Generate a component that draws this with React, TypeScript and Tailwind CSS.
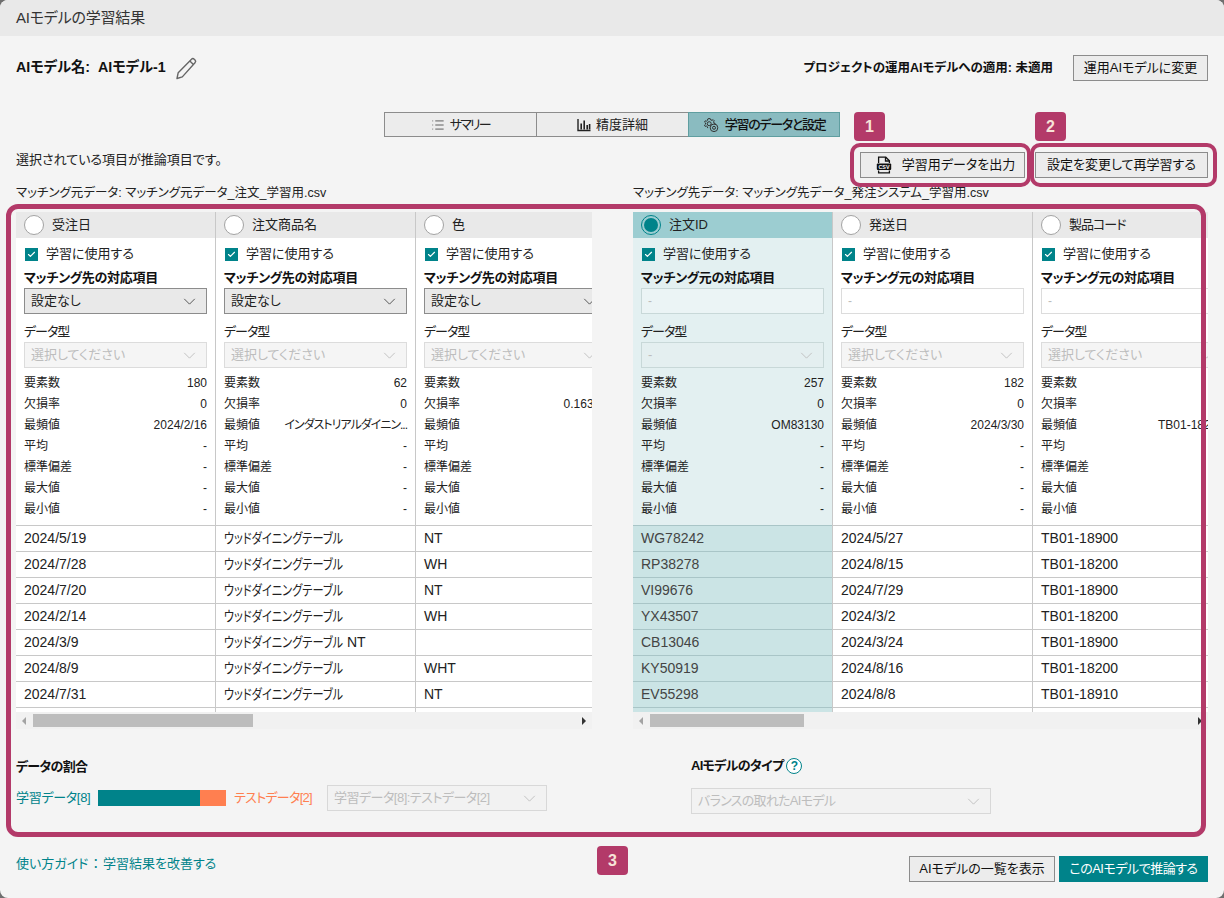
import React from "react";
import { Check, List } from "lucide-react";

type Col = {
  name: string;
  selected?: boolean;
  right?: boolean;
  stats: string[];
  rows: string[];
};

const labels = ["要素数", "欠損率", "最頻値", "平均", "標準偏差", "最大値", "最小値"];
const WOOD = "ウッドダイニングテーブル";

const leftCols: Col[] = [
  { name: "受注日", stats: ["180", "0", "2024/2/16", "-", "-", "-", "-"], rows: ["2024/5/19", "2024/7/28", "2024/7/20", "2024/2/14", "2024/3/9", "2024/8/9", "2024/7/31", ""] },
  {
    name: "注文商品名",
    stats: ["62", "0", "インダストリアルダイニン...", "-", "-", "-", "-"],
    rows: [WOOD, WOOD, WOOD, WOOD, WOOD + " NT", WOOD, WOOD, ""],
  },
  { name: "色", stats: ["6", "0.16337", "-", "-", "-", "-", "-"], rows: ["NT", "WH", "NT", "WH", "", "WHT", "NT", ""] },
];

const rightCols: Col[] = [
  { name: "注文ID", selected: true, right: true, stats: ["257", "0", "OM83130", "-", "-", "-", "-"], rows: ["WG78242", "RP38278", "VI99676", "YX43507", "CB13046", "KY50919", "EV55298", ""] },
  { name: "発送日", right: true, stats: ["182", "0", "2024/3/30", "-", "-", "-", "-"], rows: ["2024/5/27", "2024/8/15", "2024/7/29", "2024/3/2", "2024/3/24", "2024/8/16", "2024/8/8", ""] },
  { name: "製品コード", right: true, stats: ["12", "0", "TB01-18200", "-", "-", "-", "-"], rows: ["TB01-18900", "TB01-18200", "TB01-18900", "TB01-18200", "TB01-18900", "TB01-18200", "TB01-18910", ""] },
];

function Chevron({ className }: { className: string }) {
  return (
    <svg viewBox="0 0 14 8" className={className} fill="none" stroke="currentColor" strokeWidth="1">
      <path d="M1 1l6 6 6-6" />
    </svg>
  );
}

function Cell({ value }: { value: string }) {
  if (value.startsWith(WOOD)) {
    return (
      <>
        <span className="inline-block w-[119px] origin-left scale-x-[0.8]">{WOOD}</span>
        <span className="ml-1">{value.slice(WOOD.length).trim()}</span>
      </>
    );
  }
  return <>{value}</>;
}

function Column({ col }: { col: Col }) {
  const sel = col.selected;
  return (
    <div className={`w-[200px] shrink-0 border-r border-[#c8c8c8] ${sel ? "bg-[#e3f0f1]" : "bg-white"}`}>
      <div className={`h-[26px] flex items-center pl-2 gap-2 ${sel ? "bg-[#9ccdd1]" : "bg-[#e9e9e9]"}`}>
        {sel ? (
          <span className="w-5 h-5 rounded-full border-[1.5px] border-[#00838a] flex items-center justify-center">
            <span className="w-[14px] h-[14px] rounded-full bg-[#00838a]" />
          </span>
        ) : (
          <span className="w-5 h-5 rounded-full border-[1.5px] border-[#a3a3a3] bg-white" />
        )}
        <span className={`text-[13px] text-[#222] ${col.name === "製品コード" ? "tracking-[-1px]" : ""}`}>{col.name}</span>
      </div>
      <div className="px-2">
        <div className="h-[32px] flex items-center gap-2 pl-px">
          <span className="w-[13px] h-[13px] bg-[#00838a] flex items-center justify-center">
            <Check size={9} color="white" strokeWidth={3} />
          </span>
          <span className="text-[13px] text-[#222]">学習に使用する</span>
        </div>
        <div className="h-[16px] leading-[16px] text-[13px] font-bold text-[#111] whitespace-nowrap tracking-[-0.3px]">
          {col.right ? "マッチング元の対応項目" : "マッチング先の対応項目"}
        </div>
        <div className="h-[2px]" />
        {col.right ? (
          <div className={`h-[26px] w-[183px] border flex items-center px-[6px] text-[12px] text-[#bbb] ${sel ? "bg-[#ebf4f5] border-[#c8d8d8]" : "bg-white border-[#dcdcdc]"}`}>-</div>
        ) : (
          <div className="h-[26px] w-[183px] border-[1.5px] border-[#8c8c8c] bg-[#e9e9e9] flex items-center justify-between px-[6px] text-[13px] text-[#222]">
            <span>設定なし</span>
            <Chevron className="w-[13px] h-[7px] mr-[4px] text-[#444]" />
          </div>
        )}
        <div className="h-[28px] flex items-center pt-[8px] text-[13px] text-[#222] tracking-[-1px]">データ型</div>
        <div className={`h-[26px] w-[183px] border flex items-center justify-between px-[6px] text-[13px] text-[#bdbdbd] ${sel ? "bg-[#e4eff0] border-[#c8d8d8]" : "bg-[#f5f5f5] border-[#dcdcdc]"}`}>
          <span>{sel ? "-" : "選択してください"}</span>
          <Chevron className="w-[13px] h-[7px] mr-[4px] text-[#bbb]" />
        </div>
        <div className="mt-[4px] pb-[6px]">
          {labels.map((l, i) => (
            <div key={l} className="h-[21px] w-[183px] flex items-center justify-between text-[12px] text-[#222] whitespace-nowrap">
              <span>{l}</span>
              <span className={col.stats[i].startsWith("インダ") ? "tracking-[-1px]" : ""}>{col.stats[i]}</span>
            </div>
          ))}
        </div>
      </div>
      {col.rows.map((r, i) => (
        <div
          key={i}
          className={`h-[26px] flex items-center px-2 text-[14px] border-t whitespace-nowrap ${sel ? "bg-[#cbe4e5] border-[#a9c5c7] text-[#444]" : "border-[#c8c8c8] text-[#222]"}`}
        >
          <Cell value={r} />
        </div>
      ))}
    </div>
  );
}

function DataTable({ cols, thumbW, width }: { cols: Col[]; thumbW: number; width: string }) {
  return (
    <div className={`${width} shrink-0`}>
      <div className="h-[500px] flex overflow-hidden">
        {cols.map((c) => (
          <Column key={c.name} col={c} />
        ))}
      </div>
      <div className="h-[17px] bg-[#f1f1f1] flex items-center">
        <span className="ml-[6px] w-0 h-0 border-y-[4px] border-y-transparent border-r-[4px] border-r-[#a3a3a3]" />
        <span className="ml-[7px] h-[13px] bg-[#bdbdbd]" style={{ width: thumbW }} />
        <span className="ml-auto mr-[6px] w-0 h-0 border-y-[4px] border-y-transparent border-l-[4px] border-l-[#333]" />
      </div>
    </div>
  );
}

function Badge({ n, className }: { n: string; className: string }) {
  return (
    <div className={`absolute w-[31px] h-[29px] rounded-[4px] bg-[#b33a69] text-[#f7e3d8] font-bold text-[16px] flex items-center justify-center ${className}`}>
      {n}
    </div>
  );
}

function Btn({ children, className = "" }: { children: React.ReactNode; className?: string }) {
  return (
    <div className={`h-[26px] border-[1.5px] border-[#8c8c8c] bg-[#ececec] flex items-center justify-center text-[13px] text-[#111] whitespace-nowrap ${className}`}>
      {children}
    </div>
  );
}

function Pencil() {
  return (
    <svg width="24" height="24" viewBox="0 0 24 24" fill="none" stroke="#666" strokeWidth="1.4" strokeLinejoin="round">
      <path d="M3 22.5l1.2-5.8L17.5 3.2c.8-.8 1.9-.8 2.7 0l.8.8c.8.8.8 1.9 0 2.7L8.3 20.9z" />
      <path d="M15.8 5l3.6 3.6" />
    </svg>
  );
}

function Bars() {
  return (
    <svg width="14" height="14" viewBox="0 0 14 14" fill="none" stroke="#222" strokeWidth="1.4">
      <path d="M1 1v11.5h12.5" />
      <path d="M4.2 11.5V5.5M7.2 11.5V2.5M10.2 11.5V7M12.6 11.5V6" strokeWidth="1.6" />
    </svg>
  );
}

function Gears() {
  return (
    <svg width="17" height="16" viewBox="0 0 17 16" fill="none" stroke="#333" strokeWidth="1">
      <path d="M6 1.5l1.4.3.5 1.3 1.3.2.9-.7 1.2 1.2-.7 1 .4 1.3 1.2.4v1.4" />
      <path d="M6 1.5L4.7 2l-.1 1.3-1 .8-1.3-.3-.7 1.3 1 .9-.1 1.2-1 .9.7 1.3 1.3-.3 1 .7.2 1.3" />
      <circle cx="6.2" cy="6.7" r="2" />
      <circle cx="11" cy="10.8" r="3.8" />
      <circle cx="11" cy="10.8" r="1.5" />
    </svg>
  );
}

function CsvIcon() {
  return (
    <svg width="16" height="18" viewBox="0 0 16 18">
      <path d="M2.6 7V1.2h7.2l3.6 3.6V7M2.6 14.5v2.3h10.8v-2.3" fill="none" stroke="#111" strokeWidth="1.3" />
      <path d="M9.5 1.2v3.8h3.9" fill="none" stroke="#111" strokeWidth="1.3" />
      <rect x="0.8" y="7.5" width="14.4" height="6.5" rx="1" fill="#111" />
      <text x="8" y="12.6" textAnchor="middle" fontSize="5.4" fontWeight="700" fill="#fff" fontFamily="Liberation Sans">CSV</text>
    </svg>
  );
}

export default function App() {
  return (
    <div className="w-[1224px] h-[898px] bg-[#6f6f6f] overflow-hidden [font-family:'Liberation_Sans','Noto_Sans_CJK_JP',sans-serif] [font-feature-settings:'palt']">
      <div className="relative h-full rounded-[8px] overflow-hidden bg-[#f4f4f4] flex flex-col">
        <div className="h-9 shrink-0 bg-[#e9e9e9] flex items-center px-4 text-[15px] text-[#333] tracking-[-0.2px]">AIモデルの学習結果</div>

        <div className="flex items-center justify-between pl-4 pr-4 mt-[19px] h-[26px]">
          <div className="flex items-center gap-[8px] font-bold text-[14.25px] text-[#111]">
            <span>AIモデル名:&nbsp; AIモデル-1</span>
            <Pencil />
          </div>
          <div className="flex items-center gap-5">
            <span className="font-bold text-[12.5px] text-[#111]">プロジェクトの運用AIモデルへの適用: 未適用</span>
            <Btn className="w-[135px]">運用AIモデルに変更</Btn>
          </div>
        </div>

        <div className="flex justify-start ml-[384px] mt-[31px] h-[25px] w-[456px] text-[13px] text-[#222]">
          <div className="w-[153px] border-[1.5px] border-[#8c8c8c] bg-[#ececec] flex items-center justify-center gap-[5px] tracking-[-1.8px]">
            <List size={14} strokeWidth={1.3} color="#333" />サマリー
          </div>
          <div className="w-[152px] border-y-[1.5px] border-[#8c8c8c] bg-[#ececec] flex items-center justify-center gap-[5px]">
            <Bars />精度詳細
          </div>
          <div className="w-[152px] border-[1.5px] border-[#5f9ea0] bg-[#8abbc0] flex items-center justify-center gap-[5px] font-medium text-[#111] tracking-[-1.3px]">
            <Gears />学習のデータと設定
          </div>
        </div>

        <div className="flex items-start justify-between pl-4 pr-4 mt-[15px] h-[26px]">
          <span className="text-[13px] text-[#222] -mt-[2px]">選択されている項目が推論項目です。</span>
          <div className="flex gap-[10px]">
            <Btn className="w-[165px] gap-[10px] pl-[6px]">
              <CsvIcon />
              学習用データを出力
            </Btn>
            <Btn className="w-[173px]">設定を変更して再学習する</Btn>
          </div>
        </div>

        <div className="flex pl-4 mt-[5px] h-[20px] items-center text-[12.5px] text-[#222]">
          <span className="w-[617px]">マッチング元データ: マッチング元データ_注文_学習用.csv</span>
          <span>マッチング先データ: マッチング先データ_発注システム_学習用.csv</span>
        </div>

        <div className="flex pl-4 mt-[9px] gap-[41px]">
          <DataTable cols={leftCols} width="w-[576px]" thumbW={220} />
          <DataTable cols={rightCols} width="w-[575px]" thumbW={154} />
        </div>

        <div className="flex mt-[28px] pl-4 h-[70px]">
          <div className="w-[675px]">
            <div className="h-5 flex items-center font-bold text-[13px] text-[#111] tracking-[-0.7px]">データの割合</div>
            <div className="mt-[8px] flex items-center h-[26px] text-[13px]">
              <span className="w-[82px] text-[#00838a] tracking-[-0.3px]">学習データ[8]</span>
              <span className="w-[102px] h-4 bg-[#00838a]" />
              <span className="w-[26px] h-4 bg-[#ff7f50]" />
              <span className="w-[101px] pl-2 text-[#ff7f50] tracking-[-0.7px]">テストデータ[2]</span>
              <div className="w-[220px] h-[26px] border border-[#d8d8d8] bg-[#f2f2f2] flex items-center justify-between px-[6px] text-[#bdbdbd]">
                <span className="tracking-[-0.5px]">学習データ[8]:テストデータ[2]</span>
                <Chevron className="w-[13px] h-[7px] mr-[4px] text-[#bbb]" />
              </div>
            </div>
          </div>
          <div>
            <div className="h-5 -mt-px flex items-center gap-[3px] font-bold text-[13px] text-[#111]">
              <span className="tracking-[-0.7px]">AIモデルのタイプ</span>
              <span className="w-4 h-4 rounded-full border-[1.5px] border-[#00838a] bg-white text-[#00838a] text-[12px] font-bold flex items-center justify-center">?</span>
            </div>
            <div className="mt-[12px] w-[300px] h-[26px] border border-[#d8d8d8] bg-[#f2f2f2] flex items-center justify-between px-[6px] text-[13px] text-[#bdbdbd]">
              <span className="tracking-[-0.7px]">バランスの取れたAIモデル</span>
              <Chevron className="w-[13px] h-[7px] mr-[4px] text-[#bbb]" />
            </div>
          </div>
        </div>

        <div className="flex items-center justify-between pl-4 pr-4 mt-[29px] h-[26px]">
          <span className="text-[13px] text-[#00838a] -mt-[10px]">
            使い方ガイド<span className="px-1">：</span>学習結果を改善する
          </span>
          <div className="flex gap-1">
            <Btn className="w-[146px]">AIモデルの一覧を表示</Btn>
            <div className="w-[149px] h-[26px] bg-[#00838a] text-white text-[13px] flex items-center justify-center tracking-[-0.5px]">このAIモデルで推論する</div>
          </div>
        </div>

        <Badge n="1" className="left-[854px] top-[112px]" />
        <Badge n="2" className="left-[1035px] top-[112px]" />
        <Badge n="3" className="left-[597px] top-[846px]" />
        <div className="absolute left-[850px] top-[143px] w-[181px] h-[44px] border-[4px] border-[#b33a69] rounded-[10px]" />
        <div className="absolute left-[1030px] top-[143px] w-[187px] h-[44px] border-[4px] border-[#b33a69] rounded-[10px]" />
        <div className="absolute left-[6px] top-[204px] w-[1200px] h-[633px] border-[5px] border-[#b33a69] rounded-[12px]" />
      </div>
    </div>
  );
}
